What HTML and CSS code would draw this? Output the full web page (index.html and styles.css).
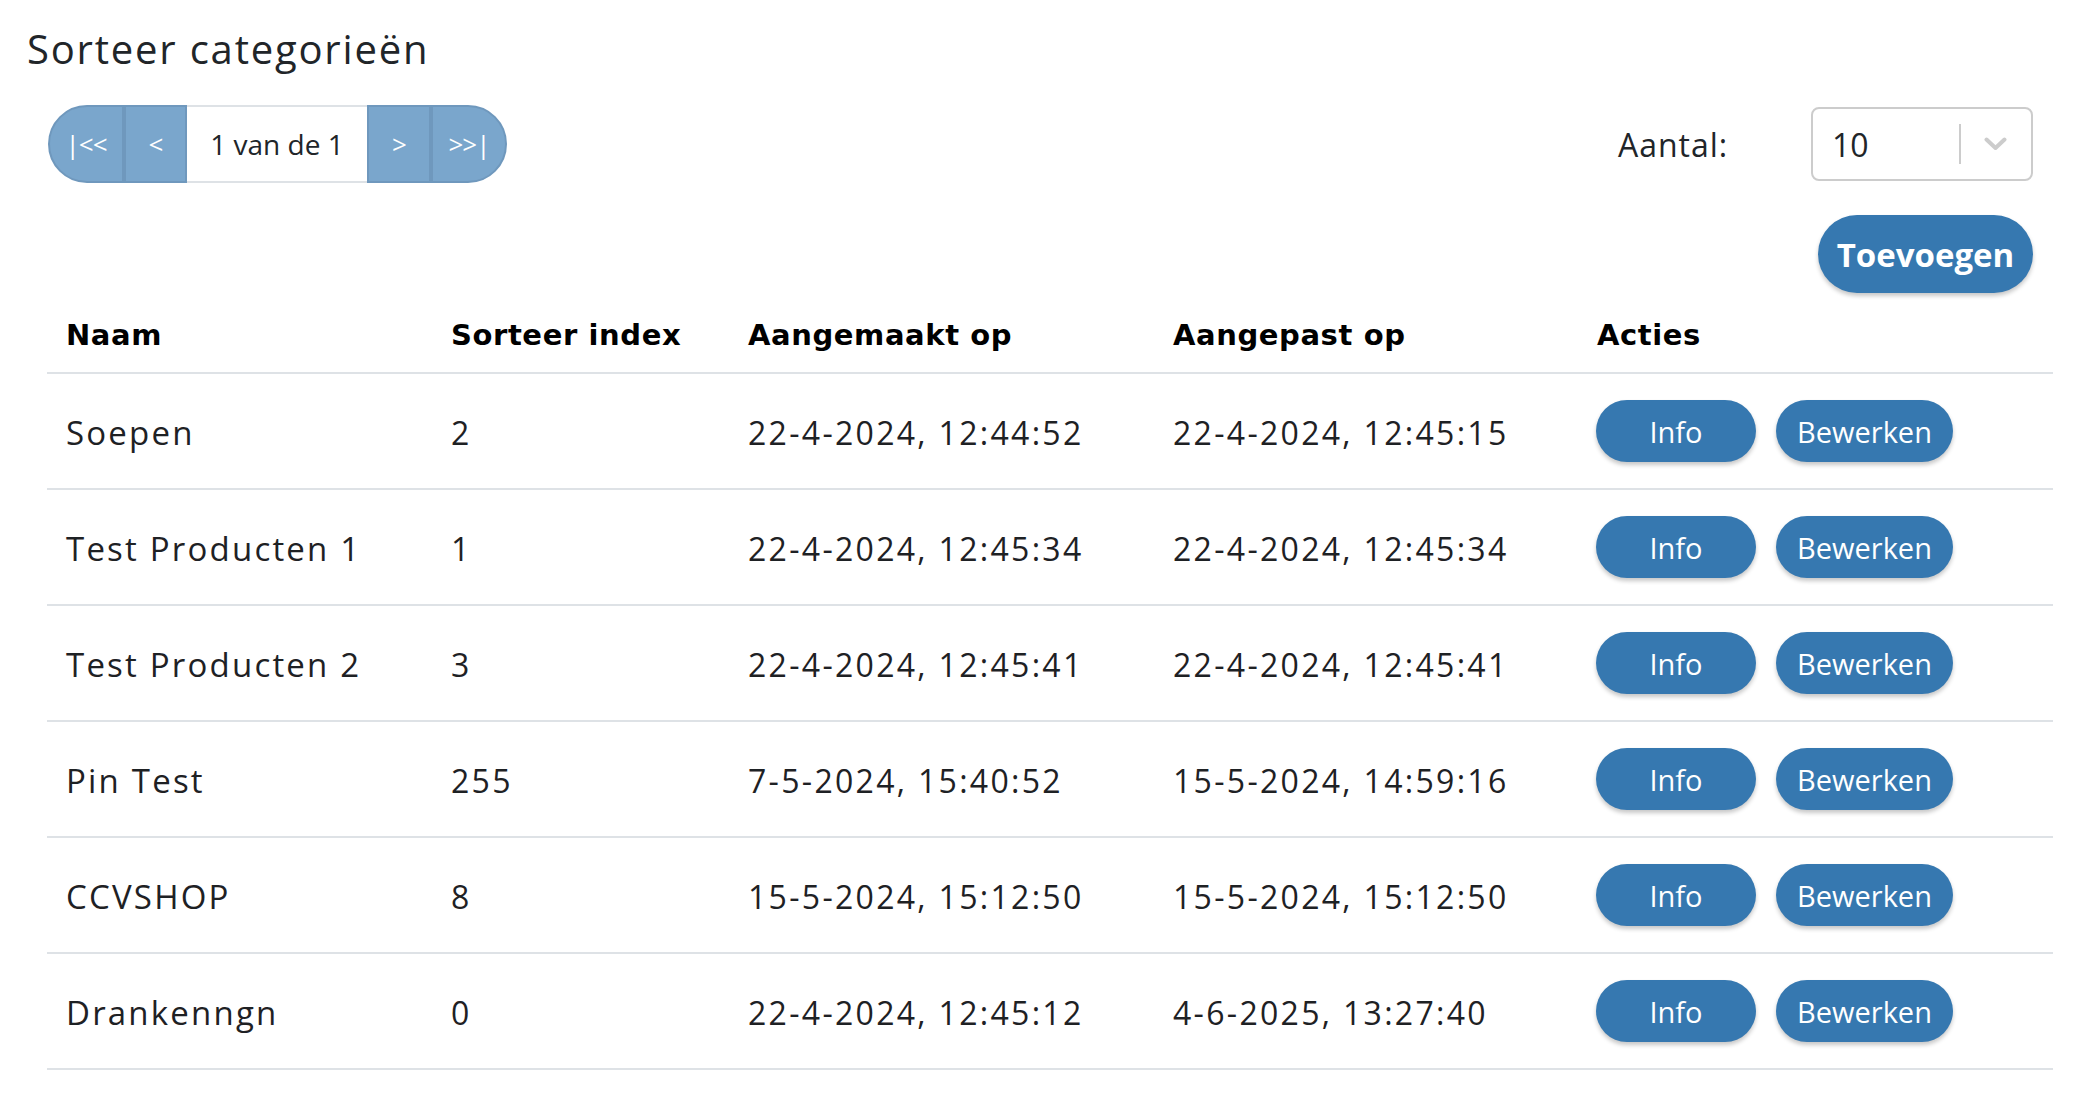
FILE: index.html
```html
<!DOCTYPE html>
<html lang="nl">
<head>
<meta charset="utf-8">
<title>Sorteer categorieën</title>
<link rel="stylesheet" href="styles.css">
</head>
<body>
<div class="page">
  <h1 class="title">Sorteer categorieën</h1>

  <div class="toolbar">
    <div class="pager">
      <button class="pg pg-first">|&lt;&lt;</button>
      <button class="pg pg-prev">&lt;</button>
      <span class="pg-info">1 van de 1</span>
      <button class="pg pg-next">&gt;</button>
      <button class="pg pg-last">&gt;&gt;|</button>
    </div>
    <div class="amount">
      <span class="amount-label">Aantal:</span>
      <div class="select">
        <span class="select-value">10</span>
        <span class="select-sep"></span>
        <svg class="select-arrow" viewBox="0 0 23 14" width="23" height="14"><path d="M2.5 2.5 L11.5 11 L20.5 2.5" fill="none" stroke="#cccccc" stroke-width="4" stroke-linecap="round" stroke-linejoin="round"/></svg>
      </div>
    </div>
  </div>

  <div class="add-bar">
    <button class="btn btn-add">Toevoegen</button>
  </div>

  <div class="table" role="table">
    <div class="tr thead" role="row">
      <div class="th" role="columnheader">Naam</div>
      <div class="th" role="columnheader">Sorteer index</div>
      <div class="th" role="columnheader">Aangemaakt op</div>
      <div class="th" role="columnheader">Aangepast op</div>
      <div class="th" role="columnheader">Acties</div>
    </div>

    <div class="tr" role="row">
      <div class="td name">Soepen</div>
      <div class="td num">2</div>
      <div class="td num">22-4-2024, 12:44:52</div>
      <div class="td num">22-4-2024, 12:45:15</div>
      <div class="td td-actions"><button class="btn btn-info">Info</button><button class="btn btn-edit">Bewerken</button></div>
    </div>
    <div class="tr" role="row">
      <div class="td name">Test Producten 1</div>
      <div class="td num">1</div>
      <div class="td num">22-4-2024, 12:45:34</div>
      <div class="td num">22-4-2024, 12:45:34</div>
      <div class="td td-actions"><button class="btn btn-info">Info</button><button class="btn btn-edit">Bewerken</button></div>
    </div>
    <div class="tr" role="row">
      <div class="td name">Test Producten 2</div>
      <div class="td num">3</div>
      <div class="td num">22-4-2024, 12:45:41</div>
      <div class="td num">22-4-2024, 12:45:41</div>
      <div class="td td-actions"><button class="btn btn-info">Info</button><button class="btn btn-edit">Bewerken</button></div>
    </div>
    <div class="tr" role="row">
      <div class="td name">Pin Test</div>
      <div class="td num">255</div>
      <div class="td num">7-5-2024, 15:40:52</div>
      <div class="td num">15-5-2024, 14:59:16</div>
      <div class="td td-actions"><button class="btn btn-info">Info</button><button class="btn btn-edit">Bewerken</button></div>
    </div>
    <div class="tr" role="row">
      <div class="td name">CCVSHOP</div>
      <div class="td num">8</div>
      <div class="td num">15-5-2024, 15:12:50</div>
      <div class="td num">15-5-2024, 15:12:50</div>
      <div class="td td-actions"><button class="btn btn-info">Info</button><button class="btn btn-edit">Bewerken</button></div>
    </div>
    <div class="tr" role="row">
      <div class="td name">Drankenngn</div>
      <div class="td num">0</div>
      <div class="td num">22-4-2024, 12:45:12</div>
      <div class="td num">4-6-2025, 13:27:40</div>
      <div class="td td-actions"><button class="btn btn-info">Info</button><button class="btn btn-edit">Bewerken</button></div>
    </div>
  </div>
</div>
</body>
</html>
```

FILE: styles.css
```css
* { box-sizing: border-box; }

body {
  margin: 0;
  background: #ffffff;
  font-family: "Open Sans", "Liberation Sans", sans-serif;
  color: #212529;
}

.page {
  padding: 0 27px;
}

.title {
  margin: 25px 0 0;
  font-size: 40px;
  line-height: 48px;
  font-weight: 400;
  letter-spacing: 0.045em;
  color: #212529;
}

/* toolbar */
.toolbar {
  display: flex;
  justify-content: space-between;
  align-items: center;
  margin-top: 32px;
  padding: 0 20px 0 21px;
}

.pager {
  display: flex;
  height: 78px;
}

.pg {
  height: 78px;
  margin: 0;
  border: 2px solid #6f98bd;
  background: #7aa6cc;
  color: #ffffff;
  font-family: "Open Sans", sans-serif;
  font-size: 26px;
  letter-spacing: -1px;
  padding: 0;
  display: flex;
  align-items: center;
  justify-content: center;
}

.pg-first { width: 76px; border-radius: 39px 0 0 39px; }
.pg-prev { width: 63px; }
.pg-next { width: 64px; }
.pg-last { width: 76px; border-radius: 0 39px 39px 0; }

.pg-info {
  width: 180px;
  height: 78px;
  display: flex;
  align-items: center;
  justify-content: center;
  border-top: 2px solid #dee2e6;
  border-bottom: 2px solid #dee2e6;
  font-size: 28px;
  color: #212529;
  background: #ffffff;
}

.amount {
  display: flex;
  align-items: center;
}

.amount-label {
  width: 193px;
  font-size: 32px;
  letter-spacing: 0.03em;
  color: #212529;
}

.select {
  width: 222px;
  height: 74px;
  border: 2px solid #cccccc;
  border-radius: 8px;
  display: flex;
  align-items: center;
  padding: 0 24px 0 19px;
  background: #ffffff;
}

.select-value {
  flex: 1;
  font-size: 32px;
  color: #212529;
}

.select-sep {
  width: 2px;
  height: 40px;
  background: #cccccc;
}

.select-arrow {
  margin-left: 23px;
  display: block;
}

/* add button */
.add-bar {
  display: flex;
  justify-content: flex-end;
  margin-top: 32px;
  padding: 0 20px;
}

.btn {
  border: none;
  margin: 0;
  background: #3678b0;
  color: #ffffff;
  font-family: "Open Sans", sans-serif;
  box-shadow: 0 3px 4px rgba(0, 0, 0, 0.22);
  display: inline-flex;
  align-items: center;
  justify-content: center;
}

.btn-add {
  height: 78px;
  width: 215px;
  border-radius: 39px;
  padding: 0;
  font-size: 33px;
  font-weight: 700;
}

/* table */
.table {
  margin: 4px 0 0 20px;
}

.tr {
  display: grid;
  grid-template-columns: 385px 297px 425px 424px 475px;
  align-items: center;
  height: 116px;
  border-bottom: 2px solid #dee2e6;
}

.tr.thead {
  height: 77px;
}

.th {
  padding: 0 19px;
  font-family: "DejaVu Sans", sans-serif;
  font-weight: 700;
  font-size: 29px;
  line-height: 32px;
  letter-spacing: 0.6px;
  color: #000000;
}

.td {
  padding: 2px 19px 0;
  font-size: 32px;
  color: #1e2124;
}

.td.name {
  font-size: 33px;
  letter-spacing: 2.2px;
}

.td.num {
  letter-spacing: 2.3px;
}

.td-actions {
  padding: 0 18px;
  display: flex;
  align-items: center;
  gap: 20px;
}

.btn-info,
.btn-edit {
  height: 62px;
  border-radius: 31px;
  font-size: 29px;
  font-weight: 400;
  padding: 0 21px;
}

.btn-info {
  min-width: 160px;
}
```
